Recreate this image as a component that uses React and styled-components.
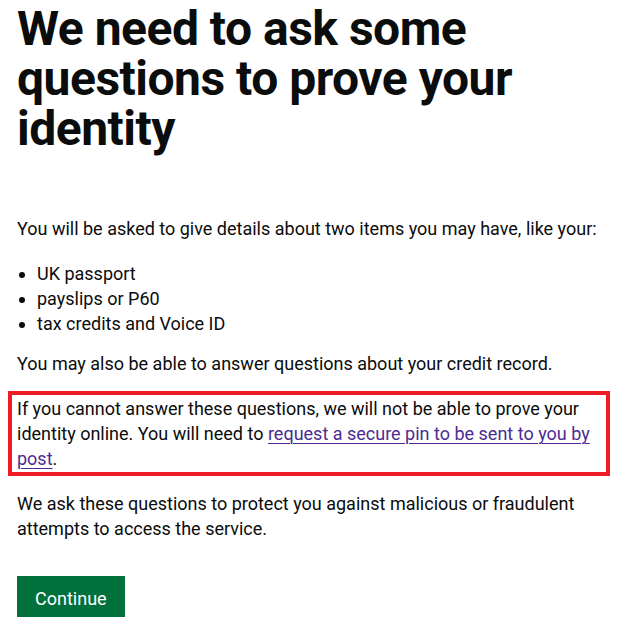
import React from 'react'
import styled, { createGlobalStyle } from 'styled-components'

const GlobalStyle = createGlobalStyle`
  html, body {
    margin: 0;
    padding: 0;
    background: #ffffff;
  }
  body {
    font-family: Roboto, "Liberation Sans", Arial, sans-serif;
    color: #0b0c0c;
    -webkit-font-smoothing: antialiased;
  }
`

const Main = styled.main`
  padding: 4px 17px 0 17px;
`

const Heading = styled.h1`
  margin: 0 0 62px 0;
  font-size: 48px;
  line-height: 50px;
  font-weight: 700;
  letter-spacing: -0.5px;
`

const Body = styled.p`
  margin: 0 0 ${(p) => p.gap ?? 20}px 0;
  font-size: 18px;
  line-height: 25px;
`

const List = styled.ul`
  margin: 0 0 15px 0;
  padding-left: 20px;
  font-size: 18px;
  line-height: 25px;
`

const Highlight = styled.div`
  margin: 0 -8px 15px -9px;
  border: 4px solid #ee1c25;
  padding: 1px 2px 1px 5px;
`

const Link = styled.a`
  color: #4c2c92;
  text-decoration: underline;
  text-decoration-thickness: 1px;
  text-underline-offset: 3px;
`

const Button = styled.button`
  display: block;
  margin: 35px 0 0 0;
  border: none;
  background-color: #00703c;
  box-shadow: 0 2px 0 #002d18;
  color: #ffffff;
  font-family: Roboto, "Liberation Sans", Arial, sans-serif;
  font-size: 18px;
  line-height: 25px;
  padding: 10px 18px 6px 18px;
  cursor: pointer;
`

export default function App() {
  return (
    <>
      <GlobalStyle />
      <Main>
        <Heading>We need to ask some questions to prove your identity</Heading>
        <Body>You will be asked to give details about two items you may have, like your:</Body>
        <List>
          <li>UK passport</li>
          <li>payslips or P60</li>
          <li>tax credits and Voice ID</li>
        </List>
        <Body gap={15}>You may also be able to answer questions about your credit record.</Body>
        <Highlight>
          <Body gap={0}>
            If you cannot answer these questions, we will not be able to prove your identity online. You will need to{' '}
            <Link href="#">request a secure pin to be sent to you by post</Link>.
          </Body>
        </Highlight>
        <Body>We ask these questions to protect you against malicious or fraudulent attempts to access the service.</Body>
        <Button>Continue</Button>
      </Main>
    </>
  )
}
